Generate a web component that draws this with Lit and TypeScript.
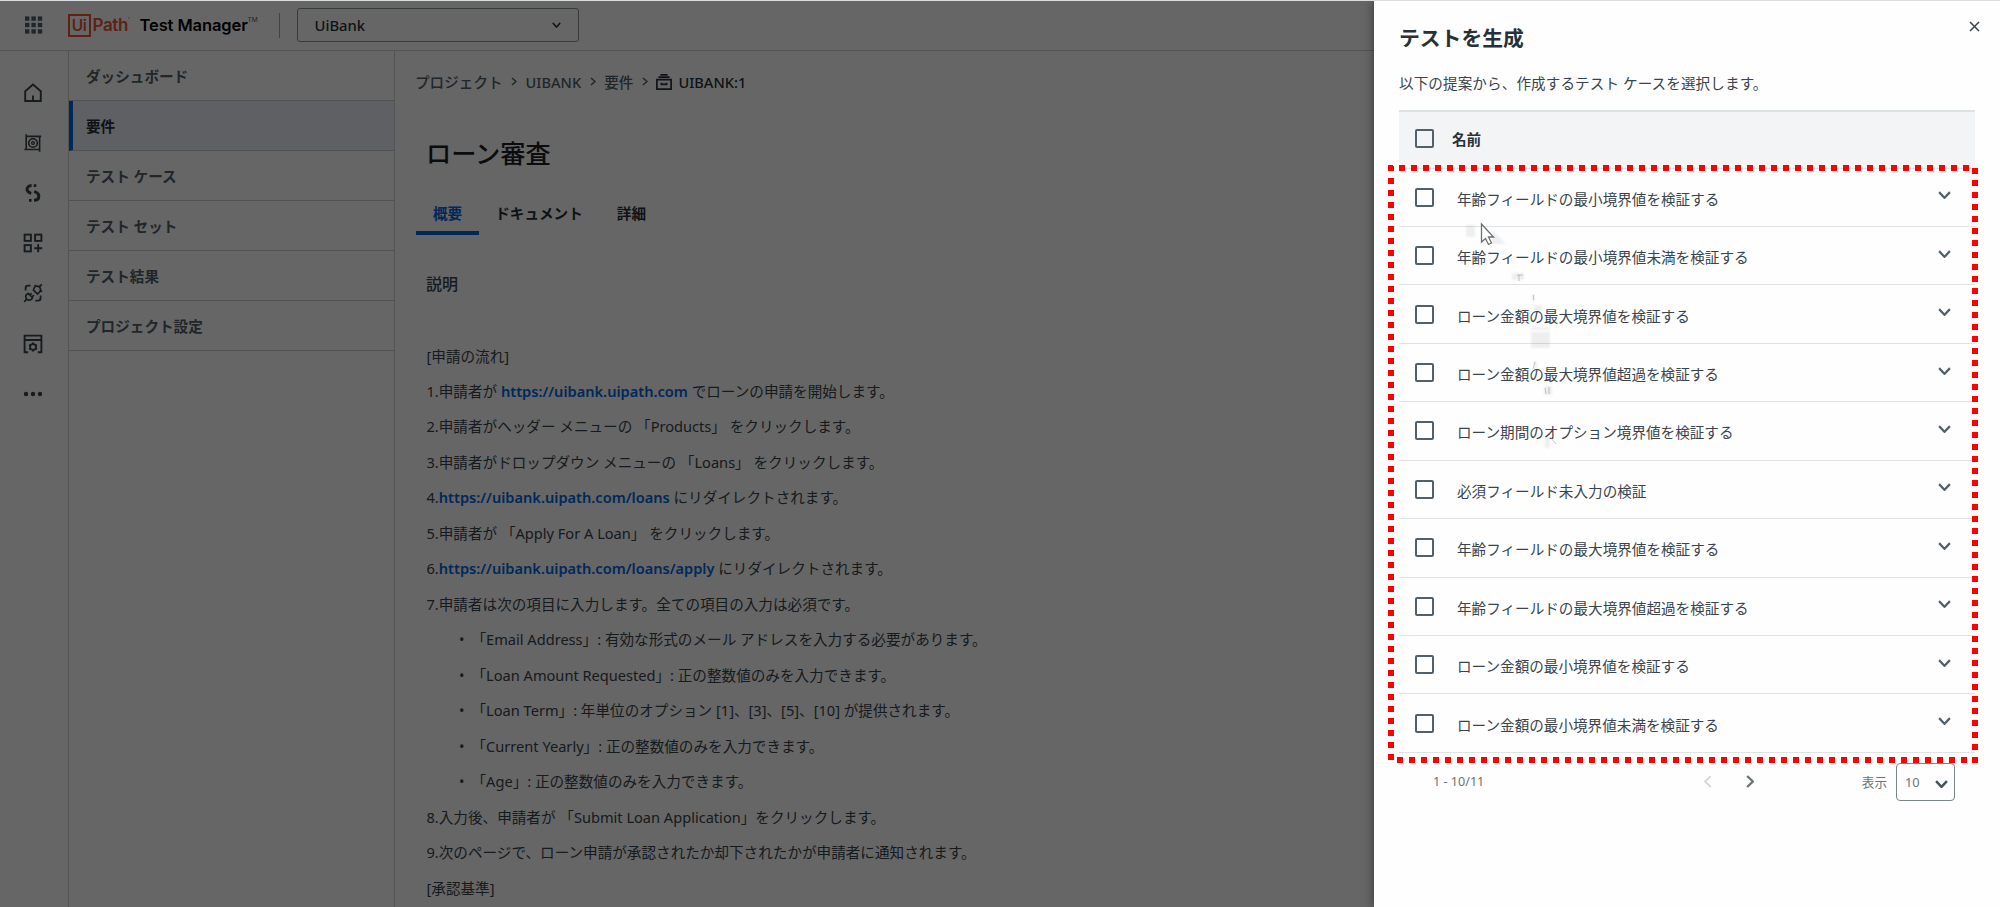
import { LitElement, html, css, svg, nothing } from "lit";
import { customElement, property } from "lit/decorators.js";
import { classMap } from "lit/directives/class-map.js";

type Part = string | { link: string };
interface Line {
  parts: Part[];
  item?: boolean;
}

const NAV = ["ダッシュボード", "要件", "テスト ケース", "テスト セット", "テスト結果", "プロジェクト設定"];

const LINES: Line[] = [
  { parts: ["[申請の流れ]"] },
  { parts: ["1.申請者が ", { link: "https://uibank.uipath.com" }, " でローンの申請を開始します。"] },
  { parts: ["2.申請者がヘッダー メニューの 「Products」 をクリックします。"] },
  { parts: ["3.申請者がドロップダウン メニューの 「Loans」 をクリックします。"] },
  { parts: ["4.", { link: "https://uibank.uipath.com/loans" }, " にリダイレクトされます。"] },
  { parts: ["5.申請者が 「Apply For A Loan」 をクリックします。"] },
  { parts: ["6.", { link: "https://uibank.uipath.com/loans/apply" }, " にリダイレクトされます。"] },
  { parts: ["7.申請者は次の項目に入力します。全ての項目の入力は必須です。"] },
  { item: true, parts: ["「Email Address」: 有効な形式のメール アドレスを入力する必要があります。"] },
  { item: true, parts: ["「Loan Amount Requested」: 正の整数値のみを入力できます。"] },
  { item: true, parts: ["「Loan Term」: 年単位のオプション [1]、[3]、[5]、[10] が提供されます。"] },
  { item: true, parts: ["「Current Yearly」: 正の整数値のみを入力できます。"] },
  { item: true, parts: ["「Age」: 正の整数値のみを入力できます。"] },
  { parts: ["8.入力後、申請者が 「Submit Loan Application」をクリックします。"] },
  { parts: ["9.次のページで、ローン申請が承認されたか却下されたかが申請者に通知されます。"] },
  { parts: ["[承認基準]"] },
];

const TESTS = [
  "年齢フィールドの最小境界値を検証する",
  "年齢フィールドの最小境界値未満を検証する",
  "ローン金額の最大境界値を検証する",
  "ローン金額の最大境界値超過を検証する",
  "ローン期間のオプション境界値を検証する",
  "必須フィールド未入力の検証",
  "年齢フィールドの最大境界値を検証する",
  "年齢フィールドの最大境界値超過を検証する",
  "ローン金額の最小境界値を検証する",
  "ローン金額の最小境界値未満を検証する",
];

const RAIL = [
  // home
  svg`<path d="M2.2 18V8.2L10 1.6l7.8 6.6V18z" stroke-width="1.9"/><path d="M10 18v-5.4" stroke-width="1.9"/>`,
  // requirements target
  svg`<path d="M3.2 1.200v15.3M3.2 3.4h15M16.6 3.4v15.4M16.6 16.500H1.4" stroke-width="1.6"/><circle cx="10" cy="10" r="4.300" stroke-width="1.6"/><circle cx="10" cy="10" r="1.4" stroke-width="1.3"/>`,
  // orchestrated flow
  svg`<path d="M8.6 2.6C5.4 2.6 4 4.4 4 6.3c0 2.6 2 3.4 4.2 4.2" stroke-width="3"/><path d="M11.2 8.4c2.4.9 4.6 2 4.6 4.9 0 2.2-1.6 4-4.8 4" stroke-width="3"/><path d="M10.7 2.6h2.6M6 17.3h2.6" stroke-width="2.8"/>`,
  // add module
  svg`<rect x="1.6" y="1.6" width="6.3" height="6.3" stroke-width="1.9"/><rect x="12.1" y="1.6" width="6.3" height="6.3" stroke-width="1.9"/><rect x="1.6" y="12.1" width="6.3" height="6.3" stroke-width="1.9"/><path d="M15.2 11.3v8M11.2 15.3h8" stroke-width="1.9"/>`,
  // integrations
  svg`<path d="M2.6 7.400V5q0-2.400 2.400-2.400H7.600M17.600 12.600V15q0 2.600-2.600 2.600H12.400" stroke-width="1.8"/><path d="M9.800 6.600l5.400 5M11 7.600c-.8-2 .6-4.400 2.800-4.400 2.600 0 4.200 1.800 3.600 4.200-.4 1.600-1.600 2.800-3 3M16.400 3.800l2.400-2.400M12.600 3.400l-1-1.400M17.600 7.600l1.600.8" stroke-width="1.7"/><path d="M4.600 9.800l5.400 5.200M5.600 10.600c-2 .2-3.200 2-2.800 3.600.4 2 2.200 3.400 4.200 2.800 1.400-.4 2.400-1.400 2.400-2.800M3.600 16.200l-2.400 2.600M6.800 12.200l1.800-1.800M9 14l1.800-1.800" stroke-width="1.7"/>`,
  // project settings window
  svg`<path d="M5.2 18.2H1.6V1.6h16.8v16.6h-3.6M1.6 6h16.8" stroke-width="1.9"/><path d="M10 8.600v8.800M6.200 10.800l7.600 4.400M13.800 10.800l-7.600 4.400" stroke-width="2.200"/><circle cx="10" cy="13" r="3" stroke-width="1.7"/><circle cx="10" cy="13" r="2.100" fill="#fff" stroke="none"/>`,
  // more
  svg`<g fill="currentColor" stroke="none"><circle cx="3" cy="10" r="2.2"/><circle cx="10" cy="10" r="2.2"/><circle cx="17" cy="10" r="2.2"/></g>`,
];

const chevron = (w: number, h: number, sw = 2, d = "M1 1l5 5 5-5", box = "0 0 12 7") =>
  html`<svg width=${w} height=${h} viewBox=${box} fill="none" stroke="currentColor" stroke-width=${sw} preserveAspectRatio="none"><path d=${d}></path></svg>`;

const FONT = css`
  :host {
    font-family: "Noto Sans", "Noto Sans CJK JP", sans-serif;
    font-size: 14.6px;
    color: #273139;
  }
  * {
    box-sizing: border-box;
  }
  svg {
    display: block;
    flex: none;
  }
`;

@customElement("app-header")
class AppHeader extends LitElement {
  static styles = [
    FONT,
    css`
      :host {
        display: flex;
        align-items: center;
        height: 51px;
        border-bottom: 1px solid #cfd3d6;
        padding: 0 0 0 24.5px;
        flex: none;
      }
      .apps {
        color: #526069;
      }
      .ui {
        width: 23px;
        height: 23px;
        border: 2px solid #e8552f;
        margin: 0 2px 0 25px;
        font: 600 15.5px/19px "Inter", sans-serif;
        letter-spacing: -0.5px;
        text-align: center;
        color: #e8552f;
      }
      .path {
        font: 600 17px/24px "Inter", sans-serif;
        letter-spacing: -0.4px;
        color: #e8552f;
        width: 38px;
        white-space: nowrap;
      }
      .path sup,
      .name sup {
        font-size: 7px;
        line-height: 0;
        font-weight: 400;
        letter-spacing: 0;
        vertical-align: 8px;
      }
      .name {
        margin-left: 9px;
        width: 121px;
        white-space: nowrap;
        font: 600 16.5px/24px "Inter", sans-serif;
        letter-spacing: -0.1px;
        color: #000;
      }
      .name sup {
        color: #526069;
        font-size: 6.5px;
        vertical-align: 9px;
      }
      .rule {
        width: 1px;
        height: 25px;
        background: #a4a9ad;
        margin: 0 17px 0 18px;
      }
      .project {
        display: flex;
        align-items: center;
        justify-content: space-between;
        width: 282px;
        height: 34px;
        border: 1px solid #8a949b;
        border-radius: 3px;
        padding: 0 17px;
        font-size: 14.8px;
        font-weight: 500;
      }
    `,
  ];
  render() {
    return html`
      <svg class="apps" width="18" height="18" viewBox="0 0 18 18" fill="currentColor">
        ${[0, 6.4, 12.8].map((y) => [0, 6.4, 12.8].map((x) => svg`<rect x=${x} y=${y + 0.4} width="4.4" height="4.4"/>`))}
      </svg>
      <div class="ui">Ui</div>
      <div class="path">Path<sup>'</sup></div>
      <div class="name">Test Manager<sup>TM</sup></div>
      <div class="rule"></div>
      <div class="project"><span>UiBank</span>${chevron(9, 6, 1.8)}</div>
    `;
  }
}

@customElement("icon-rail")
class IconRail extends LitElement {
  static styles = [
    FONT,
    css`
      :host {
        display: flex;
        flex-direction: column;
        align-items: center;
        width: 69px;
        border-right: 1px solid #cfd3d6;
        padding: 17px 2px 0 0;
        flex: none;
        color: #39444c;
      }
      .cell {
        height: 50.1px;
        display: flex;
        align-items: center;
      }
    `,
  ];
  render() {
    return RAIL.map(
      (icon) => html`<div class="cell"><svg width="20" height="20" viewBox="0 0 20 20" fill="none" stroke="currentColor">${icon}</svg></div>`
    );
  }
}

@customElement("side-nav")
class SideNav extends LitElement {
  static styles = [
    FONT,
    css`
      :host {
        display: block;
        width: 326px;
        border-right: 1px solid #cfd3d6;
        flex: none;
      }
      .item {
        height: 50px;
        border-bottom: 1px solid #c6cacd;
        padding-left: 17px;
        line-height: 50px;
        font-weight: 700;
        color: #526069;
      }
      .active {
        background: #ecf0fa;
        border-left: 4px solid #0067df;
        padding-left: 13px;
        color: #273139;
      }
    `,
  ];
  render() {
    return NAV.map((name, i) => html`<div class=${classMap({ item: true, active: i === 1 })}>${name}</div>`);
  }
}

@customElement("requirement-view")
class RequirementView extends LitElement {
  static styles = [
    FONT,
    css`
      :host {
        display: block;
        flex: 1;
        min-width: 0;
        padding: 18.5px 0 0 20px;
        white-space: nowrap;
      }
      .crumbs {
        display: flex;
        align-items: center;
        height: 24px;
        color: #526069;
        font-weight: 500;
      }
      .sep {
        width: 23px;
        display: flex;
        justify-content: center;
      }
      .current {
        display: flex;
        align-items: center;
        gap: 6px;
        color: #273139;
      }
      h1 {
        margin: 41px 0 0 11px;
        font-size: 25.2px;
        line-height: 36px;
        font-weight: 500;
        color: #1b2228;
      }
      .tabs {
        display: flex;
        margin: 29.5px 0 0 1px;
        height: 35px;
        font-weight: 700;
        line-height: 27px;
      }
      .tab {
        padding: 0 17px;
        height: 35px;
      }
      .tab.on {
        color: #0067df;
        border-bottom: 4px solid #0067df;
        margin-right: -1px;
      }
      h2 {
        margin: 36.5px 0 43px 11px;
        font-size: 16px;
        line-height: 24px;
        font-weight: 500;
        color: #39444c;
      }
      .line {
        height: 35.47px;
        line-height: 35.47px;
        padding-left: 11.5px;
        display: flex;
        white-space: pre;
        color: #39444c;
      }
      .item {
        padding-left: 44px;
      }
      .dot {
        width: 12.5px;
      }
      .link {
        color: #0067df;
        font-weight: 600;
      }
    `,
  ];
  private sep() {
    return html`<span class="sep">${chevron(6, 9, 1.5, "M1 1l4 4-4 4", "0 0 6 10")}</span>`;
  }
  render() {
    return html`
      <div class="crumbs">
        <span>プロジェクト</span>${this.sep()}<span>UIBANK</span>${this.sep()}<span>要件</span>${this.sep()}
        <span class="current">
          <svg width="16" height="16" viewBox="0 0 16 16" fill="none" stroke="currentColor" stroke-width="1.7">
            <path d="M.9 5.6h14.2v9.5H.9zM2.4 3.2h11.2M4.4.9h7.2M5.4 8.8v1.6h5.2V8.8"></path>
          </svg>
          UIBANK:1
        </span>
      </div>
      <h1>ローン審査</h1>
      <div class="tabs">
        <div class="tab on">概要</div>
        <div class="tab">ドキュメント</div>
        <div class="tab">詳細</div>
      </div>
      <h2>説明</h2>
      ${LINES.map(
        (l) => html`<div class=${classMap({ line: true, item: !!l.item })}>${l.item ? html`<span class="dot">•</span>` : nothing}${l.parts.map((p) =>
          typeof p === "string" ? html`<span>${p}</span>` : html`<span class="link">${p.link}</span>`
        )}</div>`
      )}
    `;
  }
}

@customElement("test-row")
class TestRow extends LitElement {
  @property() label = "";
  @property({ type: Boolean }) head = false;
  static styles = [
    FONT,
    css`
      :host {
        display: flex;
        align-items: center;
        height: 58.45px;
        border-bottom: 1.5px solid #dfe3e5;
        padding: 0 24px 0 16px;
        color: #39444c;
      }
      :host([head]) {
        height: 59px;
        background: #f3f4f6;
        border-top: 2px solid #dde2e4;
        border-bottom: 1.5px solid #dde2e4;
        font-weight: 700;
        padding-bottom: 1.5px;
        color: #273139;
      }
      .box {
        width: 19px;
        height: 19px;
        border: 2px solid #526069;
        border-radius: 2px;
      }
      .label {
        flex: 1;
        margin-left: 23px;
        padding-top: 2px;
      }
      :host([head]) .label {
        margin-left: 18px;
        padding-top: 0;
      }
      .arrow {
        color: #526069;
        padding-bottom: 4px;
      }
    `,
  ];
  render() {
    return html`<span class="box"></span><span class="label">${this.label}</span>${this.head
        ? nothing
        : html`<span class="arrow">${chevron(13, 8, 2)}</span>`}`;
  }
}

@customElement("generate-drawer")
class GenerateDrawer extends LitElement {
  static styles = [
    FONT,
    css`
      :host {
        display: flex;
        flex-direction: column;
        background: #fefefe;
        padding: 19.5px 25px 0 25px;
        box-shadow: 0 0 10px rgba(0, 0, 0, 0.5);
        white-space: nowrap;
      }
      .top {
        display: flex;
        justify-content: space-between;
        height: 34px;
      }
      h1 {
        margin: 0;
        font-size: 20.8px;
        line-height: 34px;
        font-weight: 700;
      }
      .close {
        margin-right: -5px;
      }
      p {
        margin: 16px 0 15px;
        line-height: 24px;
        letter-spacing: 0.08px;
        color: #39444c;
      }
      .pager {
        display: flex;
        align-items: center;
        height: 38px;
        margin-top: 10px;
        padding: 0 20px 0 34px;
        font-size: 12.6px;
        color: #6b7477;
      }
      .count {
        flex: 1;
      }
      .prev {
        color: #d3d6d8;
        margin-right: 34px;
      }
      .next {
        color: #6b7477;
        margin-right: 108px;
      }
      .size {
        display: flex;
        align-items: center;
        justify-content: space-between;
        width: 59px;
        height: 38px;
        border: 1.5px solid #7d8588;
        border-radius: 4px;
        padding: 0 6px 0 8px;
        margin-left: 9px;
        font-size: 12.8px;
      }
      .drop {
        color: #46525a;
        padding-top: 4px;
      }
    `,
  ];
  render() {
    return html`
      <div class="top">
        <h1>テストを生成</h1>
        <svg class="close" width="11" height="11" viewBox="0 0 11 11" stroke="#39444c" stroke-width="1.5"><path d="M1 1l9 9M10 1l-9 9"></path></svg>
      </div>
      <p>以下の提案から、作成するテスト ケースを選択します。</p>
      <test-row head label="名前"></test-row>
      ${TESTS.map((t) => html`<test-row .label=${t}></test-row>`)}
      <div class="pager">
        <span class="count">1 - 10/11</span>
        <span class="prev">${chevron(8, 13, 1.6, "M6 1l-5 5 5 5", "0 0 7 12")}</span>
        <span class="next">${chevron(8, 13, 2, "M1 1l5 5-5 5", "0 0 7 12")}</span>
        <span>表示</span>
        <span class="size">10<span class="drop">${chevron(13, 8, 2.3)}</span></span>
      </div>
    `;
  }
}

@customElement("app-root")
class AppRoot extends LitElement {
  static styles = [
    FONT,
    css`
      :host {
        display: block;
        position: relative;
        width: 2000px;
        height: 907px;
        overflow: hidden;
        background: #fff;
      }
      .page {
        display: flex;
        flex-direction: column;
        height: 907px;
      }
      .body {
        display: flex;
        flex: 1;
        min-height: 0;
      }
      .scrim {
        position: absolute;
        inset: 1px 0 0 0;
        background: rgba(0, 0, 0, 0.6);
      }
      .drawer {
        position: absolute;
        top: 1px;
        right: 0;
        bottom: 0;
        width: 626px;
      }
      .edge {
        position: absolute;
        top: 0;
        left: 0;
        right: 0;
        height: 1px;
        background: #dcdedd;
      }
      .marks {
        position: absolute;
        top: 0;
        right: 0;
      }
    `,
  ];
  render() {
    return html`
      <div class="page">
        <app-header></app-header>
        <div class="body">
          <icon-rail></icon-rail>
          <side-nav></side-nav>
          <requirement-view></requirement-view>
        </div>
      </div>
      <div class="scrim"></div>
      <generate-drawer class="drawer"></generate-drawer>
      <div class="edge"></div>
      <svg class="marks" width="640" height="907" viewBox="1360 0 640 907" fill="none">
        <defs>
          <filter id="soft" x="-20%" y="-20%" width="140%" height="140%"><feGaussianBlur stdDeviation="1.2"></feGaussianBlur></filter>
        </defs>
        <g fill="#000" opacity=".06" filter="url(#soft)">
          <path d="M1466 225h9v12h-9zM1492 230l14 14h-14zM1512 273h12v7h-12z"></path>
          <path d="M1531 327h19v3h-19zM1531 332h19v16h-19z"></path>
          <path d="M1532 294h3v8h-3zM1534 305h8v7h-8zM1534 361h3v10h-3zM1544 386h8v9h-8zM1545 434h5v14h-5z"></path>
        </g>
        <path d="M1519 275v6M1517 275h6M1533.500 295v5M1535 362l-2 7M1545 388l1 6M1549 387v7M1550 437l6 7" stroke="#9a9a9a" stroke-width="1" opacity=".55"></path>
        <path d="M1481.500 224v18l4-3.500 3 6 3-1.500-3-6h5z" fill="#fff" stroke="#6b6f72" stroke-width="1.3"></path>
        <g stroke="#f00" stroke-width="6" stroke-dasharray="6 6">
          <path d="M1399 168H1970"></path>
          <path d="M1388 168H1393"></path>
          <path d="M1391 166V171" stroke-dasharray="none"></path>
          <path d="M1391 178V760"></path>
          <path d="M1975 168V756"></path>
          <path d="M1397 760H1970"></path>
          <path d="M1972 760H1978" stroke-dasharray="none"></path>
        </g>
      </svg>
    `;
  }
}
